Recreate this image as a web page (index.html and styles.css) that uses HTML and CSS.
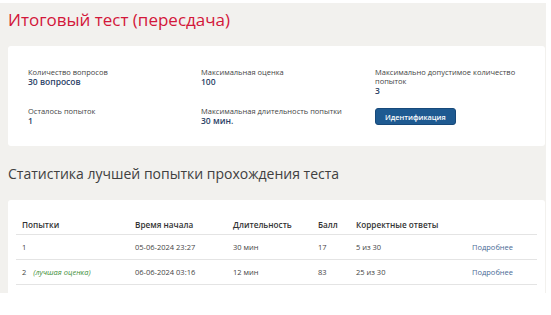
FILE: index.html
```html
<!DOCTYPE html>
<html lang="ru">
<head>
    <meta charset="UTF-8">
    <meta name="viewport" content="width=device-width, initial-scale=1.0">
    <title>Итоговый тест</title>
    <link rel="stylesheet" href="styles.css">
</head>
<body>
<div class="page">
    <h1 class="test-title">Итоговый тест (пересдача)</h1>

    <div class="card info-card">
        <div class="info-item">
            <div class="info-label">Количество вопросов</div>
            <div class="info-value">30 вопросов</div>
        </div>
        <div class="info-item">
            <div class="info-label">Максимальная оценка</div>
            <div class="info-value">100</div>
        </div>
        <div class="info-item">
            <div class="info-label">Максимально допустимое количество попыток</div>
            <div class="info-value">3</div>
        </div>
        <div class="info-item">
            <div class="info-label">Осталось попыток</div>
            <div class="info-value">1</div>
        </div>
        <div class="info-item">
            <div class="info-label">Максимальная длительность попытки</div>
            <div class="info-value">30 мин.</div>
        </div>
        <div class="info-item">
            <button type="button" class="ident-button">Идентификация</button>
        </div>
    </div>

    <h2 class="section-title">Статистика лучшей попытки прохождения теста</h2>

    <div class="card table-card">
        <table class="attempts">
            <colgroup>
                <col style="width: 113px">
                <col style="width: 98px">
                <col style="width: 85px">
                <col style="width: 38px">
                <col style="width: 116px">
                <col>
            </colgroup>
            <thead>
                <tr>
                    <th>Попытки</th>
                    <th>Время начала</th>
                    <th>Длительность</th>
                    <th>Балл</th>
                    <th>Корректные ответы</th>
                    <th></th>
                </tr>
            </thead>
            <tbody>
                <tr>
                    <td>1</td>
                    <td>05-06-2024 23:27</td>
                    <td>30 мин</td>
                    <td>17</td>
                    <td>5 из 30</td>
                    <td><a href="#" class="details-link">Подробнее</a></td>
                </tr>
                <tr>
                    <td>2 <span class="best-mark">(лучшая оценка)</span></td>
                    <td>06-06-2024 03:16</td>
                    <td>12 мин</td>
                    <td>83</td>
                    <td>25 из 30</td>
                    <td><a href="#" class="details-link">Подробнее</a></td>
                </tr>
            </tbody>
        </table>
    </div>
</div>
</body>
</html>
```

FILE: styles.css
```css
body {
    margin: 0;
    background-color: #fff;
    font-family: "Open Sans", "Noto Sans", sans-serif;
    color: #333;
}
.page {
    background-color: #f2f1ee;
    width: 537px;
    height: 290px;
    margin-top: 3px;
    padding: 0 1px 0 8px;
    overflow: hidden;
}
.test-title {
    margin: 0;
    padding-top: 6px;
    font-size: 17px;
    line-height: 22px;
    font-weight: 500;
    color: #d3173a;
}
.card {
    background-color: #fff;
    border-radius: 3px;
}
.info-card {
    margin-top: 15px;
    padding: 22px 20px 21px 20px;
    display: grid;
    grid-template-columns: 173px 174px 1fr;
    row-gap: 12px;
}
.info-label {
    font-size: 7.5px;
    line-height: 9px;
    color: #444;
}
.info-value {
    font-size: 8.5px;
    line-height: 9px;
    font-weight: 600;
    color: #2b3f66;
}
.ident-button {
    display: block;
    height: 17px;
    margin-top: 1px;
    padding: 0 9px;
    background-color: #1e5a91;
    border: 1px solid #17497a;
    border-radius: 3px;
    color: #fff;
    font-family: inherit;
    font-size: 7.3px;
    font-weight: 600;
    cursor: pointer;
}
.section-title {
    margin: 18px 0 16px;
    font-size: 14px;
    line-height: 20px;
    font-weight: 400;
    color: #404040;
}
.table-card {
    padding: 14px 8px 10px;
}
.attempts {
    width: 521px;
    table-layout: fixed;
    border-collapse: collapse;
    font-size: 7.5px;
}
.attempts th {
    text-align: left;
    font-size: 8.2px;
    font-weight: 600;
    color: #333;
    height: 20px;
    padding: 0 6px;
    border-bottom: 1px solid #e4e4e4;
}
.attempts td {
    height: 24px;
    padding: 0 6px;
    color: #444;
    border-bottom: 1px solid #e4e4e4;
}
.best-mark {
    margin-left: 5px;
    font-style: italic;
    color: #3f8f3a;
}
.details-link {
    color: #4a6b95;
    text-decoration: none;
}
```
